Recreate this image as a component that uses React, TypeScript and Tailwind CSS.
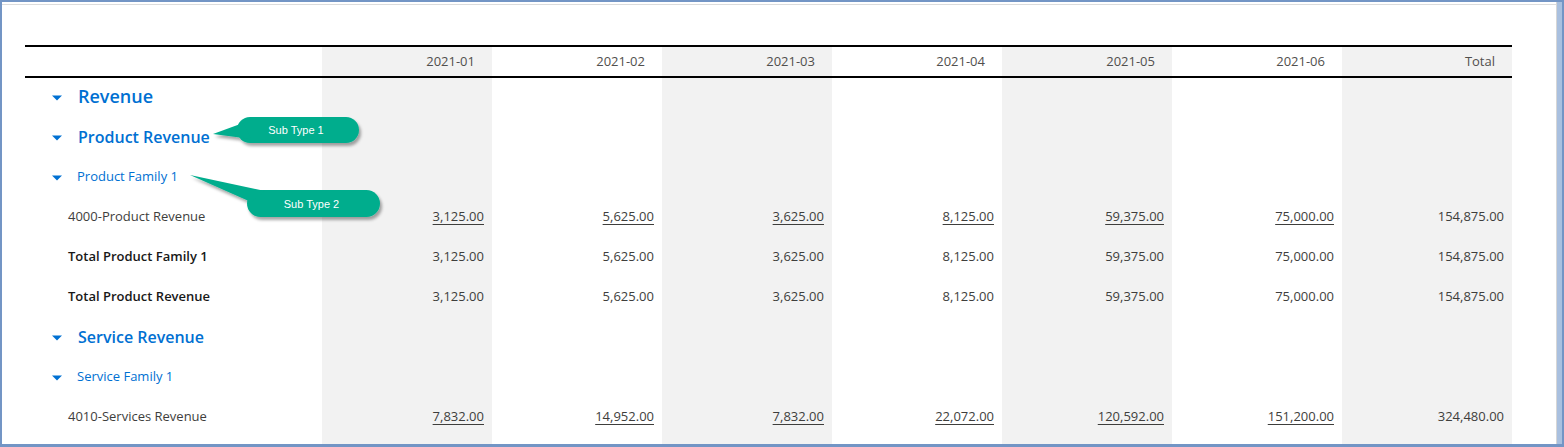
import React from "react";

const months = ["2021-01", "2021-02", "2021-03", "2021-04", "2021-05", "2021-06", "Total"];

type Row =
  | { kind: "group"; level: 1 | 2 | 3; label: string }
  | { kind: "account" | "total"; label: string; values: string[] };

const rows: Row[] = [
  { kind: "group", level: 1, label: "Revenue" },
  { kind: "group", level: 2, label: "Product Revenue" },
  { kind: "group", level: 3, label: "Product Family 1" },
  {
    kind: "account",
    label: "4000-Product Revenue",
    values: ["3,125.00", "5,625.00", "3,625.00", "8,125.00", "59,375.00", "75,000.00", "154,875.00"],
  },
  {
    kind: "total",
    label: "Total Product Family 1",
    values: ["3,125.00", "5,625.00", "3,625.00", "8,125.00", "59,375.00", "75,000.00", "154,875.00"],
  },
  {
    kind: "total",
    label: "Total Product Revenue",
    values: ["3,125.00", "5,625.00", "3,625.00", "8,125.00", "59,375.00", "75,000.00", "154,875.00"],
  },
  { kind: "group", level: 2, label: "Service Revenue" },
  { kind: "group", level: 3, label: "Service Family 1" },
  {
    kind: "account",
    label: "4010-Services Revenue",
    values: ["7,832.00", "14,952.00", "7,832.00", "22,072.00", "120,592.00", "151,200.00", "324,480.00"],
  },
];

function shade(i: number) {
  return i % 2 === 0 ? "bg-[#f2f2f2]" : "bg-white";
}

function Caret() {
  return (
    <svg width="10" height="6" viewBox="0 0 10 6" className="mt-[2px] shrink-0">
      <path d="M0 0.5h10L5 5.5z" fill="#0070d2" />
    </svg>
  );
}

function GroupLabel({ level, label }: { level: 1 | 2 | 3; label: string }) {
  const textClass =
    level === 1
      ? "text-[18px] font-semibold ml-4"
      : level === 2
        ? "text-[16px] font-semibold ml-4"
        : "text-[13px] font-normal ml-[15px]";
  return (
    <div className={`flex h-[40px] items-center pl-[27px] ${level === 3 ? "pb-[2px]" : "pb-[3px]"}`}>
      <Caret />
      <span className={`${textClass} text-[#0070d2]`}>{label}</span>
    </div>
  );
}

function Callout({
  className,
  width,
  height,
  pill,
  tail,
  text,
}: {
  className: string;
  width: number;
  height: number;
  pill: { x: number; y: number; w: number; h: number };
  tail: string;
  text: string;
}) {
  const id = `sh-${text.replace(/\s/g, "")}`;
  return (
    <svg width={width} height={height} className={`absolute ${className}`}>
      <defs>
        <filter id={id} x="-20%" y="-40%" width="140%" height="180%">
          <feDropShadow dx="2" dy="3" stdDeviation="1.6" floodColor="#000" floodOpacity="0.35" />
        </filter>
      </defs>
      <g filter={`url(#${id})`} fill="#06ad8d">
        <rect x={pill.x} y={pill.y} width={pill.w} height={pill.h} rx={pill.h / 2} />
        <polygon points={tail} />
      </g>
      <text
        x={pill.x + pill.w / 2 - 2}
        y={pill.y + pill.h / 2 + 4}
        textAnchor="middle"
        fill="#fff"
        fontSize="11"
        fontFamily="'Liberation Sans', Arial, sans-serif"
      >
        {text}
      </text>
    </svg>
  );
}

export default function App() {
  return (
    <div className="relative h-[447px] w-[1564px] overflow-hidden font-['Open_Sans',sans-serif]">
      <div className="flex h-full w-full border-b-[3px] border-l-2 border-r-2 border-t-2 border-[#7395c5] bg-white">
        <div className="flex-1 overflow-hidden border-r border-[#d6d6d6] pt-[2px]">
          <div className="h-full overflow-hidden border-t border-[#dcdcdc] pl-[23px] pt-[40px]">
            <div className="grid w-[1487px] grid-cols-[297px_repeat(7,170px)] border-t-2 border-black">
              {/* header */}
              <div className="h-[31px] border-b-2 border-black" />
              {months.map((m, i) => (
                <div
                  key={m}
                  className={`flex h-[31px] items-center justify-end border-b-2 border-black pr-[17px] text-[13px] text-[#514f4d] ${shade(i)}`}
                >
                  {m}
                </div>
              ))}

              {/* body */}
              {rows.map((row, r) => (
                <React.Fragment key={r}>
                  {row.kind === "group" ? (
                    <GroupLabel level={row.level} label={row.label} />
                  ) : (
                    <div
                      className={`flex h-[40px] items-center pb-[2px] pl-[43px] text-[13px] ${
                        row.kind === "total" ? "font-semibold text-[#181818]" : "text-[#3e3e3c]"
                      }`}
                    >
                      {row.label}
                    </div>
                  )}
                  {months.map((m, i) => (
                    <div
                      key={m}
                      className={`flex h-[40px] items-center justify-end pb-[2px] pr-2 text-[13px] text-[#3e3e3c] ${shade(i)}`}
                    >
                      {row.kind !== "group" && (
                        <span
                          className={
                            row.kind === "account" && i < 6
                              ? "underline decoration-[#3e3e3c] underline-offset-[3px]"
                              : ""
                          }
                        >
                          {row.values[i]}
                        </span>
                      )}
                    </div>
                  ))}
                </React.Fragment>
              ))}

              {/* filler so shaded columns reach the frame */}
              <div className="h-[40px]" />
              {months.map((m, i) => (
                <div key={m} className={`h-[40px] ${shade(i)}`} />
              ))}
            </div>
          </div>
        </div>
        <div className="w-[5px] bg-[#a9c0df]" />
      </div>

      <Callout
        className="left-[205px] top-[110px]"
        width={170}
        height={45}
        pill={{ x: 32, y: 7, w: 122, h: 26 }}
        tail="8,24 38,13 46,29"
        text="Sub Type 1"
      />
      <Callout
        className="left-[185px] top-[168px]"
        width={210}
        height={58}
        pill={{ x: 62, y: 22, w: 133, h: 27 }}
        tail="5,7 80,23 66,34"
        text="Sub Type 2"
      />
    </div>
  );
}
